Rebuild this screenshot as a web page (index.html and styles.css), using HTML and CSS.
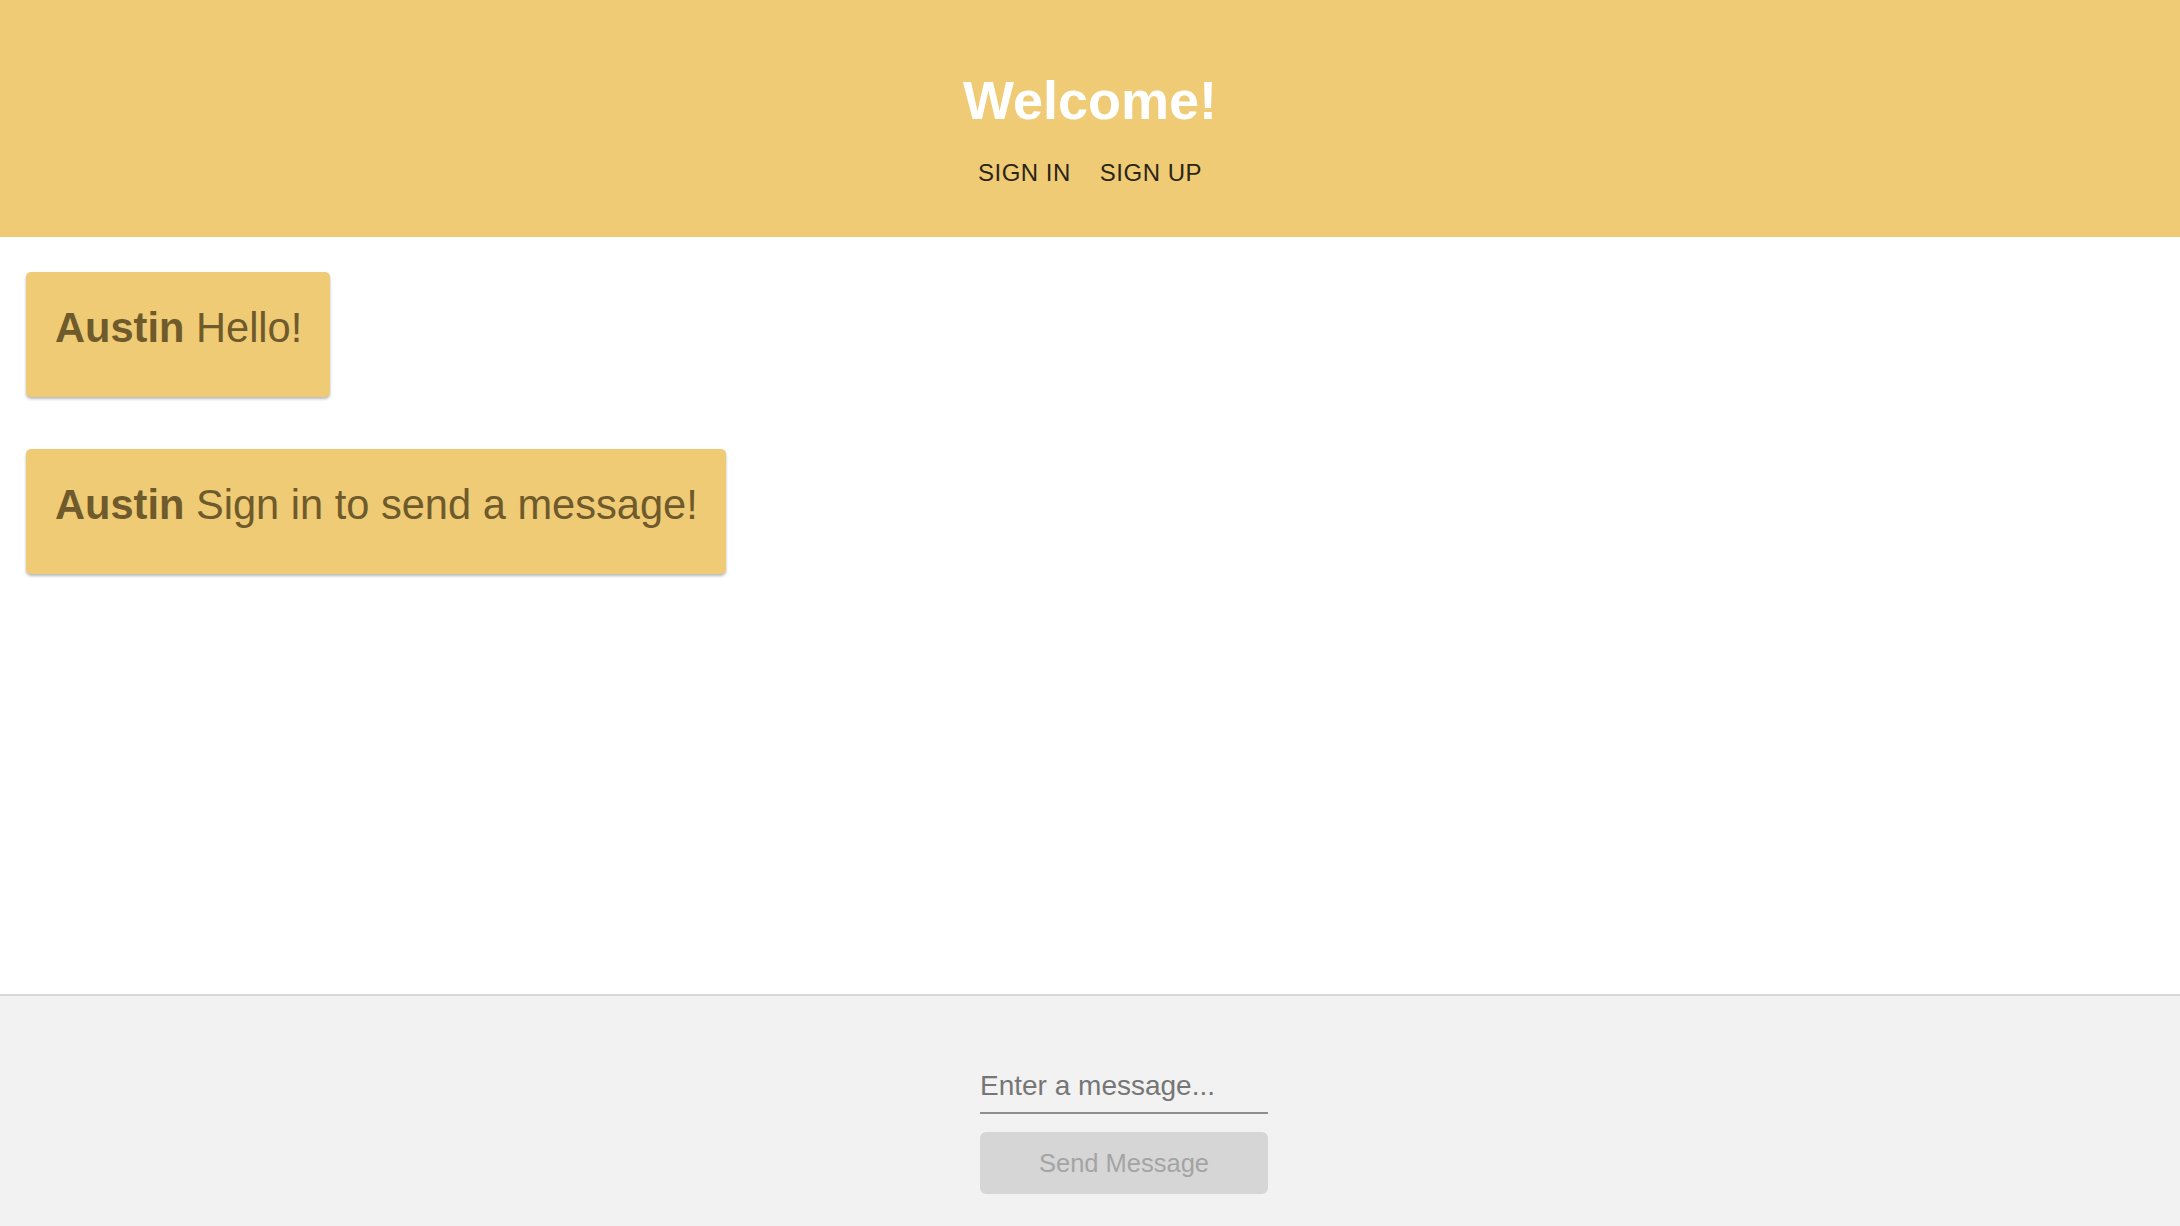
FILE: index.html
```html
<!DOCTYPE html>
<html lang="en">
<head>
<meta charset="utf-8">
<title>Welcome</title>
<link rel="stylesheet" href="styles.css">
</head>
<body>
<div class="app">
  <header class="header">
    <h1 class="title">Welcome!</h1>
    <nav class="nav">
      <a class="nav-link" href="#">Sign in</a>
      <a class="nav-link" href="#">Sign up</a>
    </nav>
  </header>
  <main class="messages">
    <div class="bubble"><strong class="author">Austin</strong> Hello!</div>
    <div class="bubble"><strong class="author">Austin</strong> Sign in to send a message!</div>
  </main>
  <footer class="composer">
    <form class="composer-form">
      <input class="composer-input" type="text" placeholder="Enter a message...">
      <button class="composer-send" type="button" disabled>Send Message</button>
    </form>
  </footer>
</div>
</body>
</html>
```

FILE: styles.css
```css
* { box-sizing: border-box; }
html, body { margin: 0; padding: 0; }
body {
  font-family: "Liberation Sans", Arial, Helvetica, sans-serif;
  background: #ffffff;
}
.app {
  display: flex;
  flex-direction: column;
  height: 100vh;
}
.header {
  background: #efcb75;
  display: flex;
  flex-direction: column;
  align-items: center;
  padding: 70px 0 49px;
}
.title {
  margin: 0;
  font-size: 54px;
  line-height: 60px;
  font-weight: 700;
  color: #ffffff;
}
.nav {
  display: flex;
  gap: 29px;
  margin-top: 28px;
}
.nav-link {
  font-size: 24px;
  line-height: 30px;
  letter-spacing: 0.5px;
  text-transform: uppercase;
  text-decoration: none;
  color: #2b2516;
}
.messages {
  flex: 1;
  display: flex;
  flex-direction: column;
  align-items: flex-start;
  gap: 52px;
  padding: 35px 26px 0;
}
.bubble {
  background: #efcb75;
  color: #6e5a2b;
  font-size: 41.6px;
  line-height: 46px;
  padding: 33px 28px 46px 29px;
  border-radius: 5px;
  box-shadow: 0 2px 3px rgba(0, 0, 0, 0.28);
}
.author { font-weight: 700; }
.composer {
  background: #f2f2f2;
  border-top: 2px solid #d8d8d8;
  display: flex;
  justify-content: center;
  padding: 74px 0 32px;
}
.composer-form {
  display: flex;
  flex-direction: column;
  width: 288px;
  margin-left: 68px;
}
.composer-input {
  font-family: inherit;
  font-size: 28px;
  line-height: 32px;
  height: 44px;
  padding: 0 0 10px;
  border: none;
  border-bottom: 2px solid #8e8e8e;
  background: transparent;
  color: #555;
  outline: none;
}
.composer-input::placeholder { color: #767676; opacity: 1; }
.composer-send {
  margin-top: 18px;
  height: 62px;
  border: none;
  border-radius: 6px;
  background: #d6d6d6;
  color: #a4a4a4;
  font-family: inherit;
  font-size: 25.5px;
}
```
